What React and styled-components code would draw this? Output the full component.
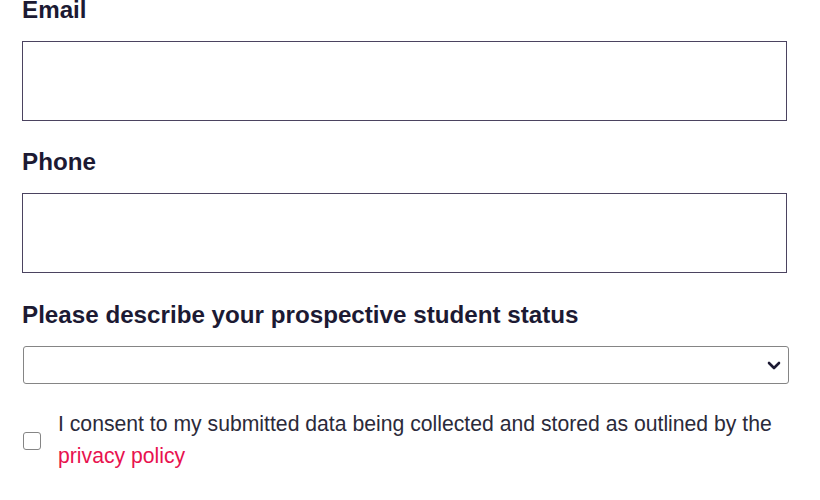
import styled, { createGlobalStyle } from "styled-components";

const GlobalStyle = createGlobalStyle`
  body {
    margin: 0;
    background: #ffffff;
    font-family: "Liberation Sans", Arial, sans-serif;
  }
`;

const Form = styled.form`
  display: flex;
  flex-direction: column;
  width: 766px;
  padding: 0 0 0 22px;
`;

const Field = styled.div`
  display: flex;
  flex-direction: column;
  margin-bottom: ${(p) => p.$gap || "31px"};
`;

const Label = styled.label`
  font-size: 24.2px;
  line-height: 20px;
  font-weight: 700;
  color: #1c1a33;
  margin-bottom: 21px;
`;

const TextInput = styled.input`
  box-sizing: border-box;
  width: 765px;
  height: 80px;
  border: 1.5px solid #4b4360;
  border-radius: 0;
  padding: 0 12px;
  font: inherit;
  font-size: 20px;
  outline: none;
`;

const SelectWrap = styled.div`
  position: relative;
  width: 766px;
  margin-left: 1px;
`;

const Select = styled.select`
  box-sizing: border-box;
  appearance: none;
  width: 100%;
  height: 38px;
  border: 1.5px solid #858585;
  border-radius: 3px;
  background: #ffffff;
  font: inherit;
  font-size: 18px;
  padding: 0 40px 0 8px;
  outline: none;
`;

const Chevron = styled.svg`
  position: absolute;
  right: 8px;
  top: 15px;
  pointer-events: none;
`;

const Consent = styled.div`
  display: flex;
  align-items: center;
  gap: 17px;
  margin-top: -7px;
`;

const Check = styled.input`
  appearance: none;
  flex: none;
  box-sizing: border-box;
  width: 18px;
  height: 18px;
  margin: 2px 0 0 1px;
  border: 1.5px solid #858585;
  border-radius: 3px;
  background: #ffffff;
`;

const ConsentText = styled.p`
  margin: 0;
  font-size: 21.2px;
  line-height: 32px;
  color: #2b2a3a;
`;

const Link = styled.a`
  color: #e8124f;
  text-decoration: none;
`;

export default function App() {
  return (
    <>
      <GlobalStyle />
      <Form onSubmit={(e) => e.preventDefault()}>
        <Field>
          <Label htmlFor="email">Email</Label>
          <TextInput id="email" type="email" />
        </Field>
        <Field $gap="32px">
          <Label htmlFor="phone">Phone</Label>
          <TextInput id="phone" type="tel" />
        </Field>
        <Field $gap="31px">
          <Label htmlFor="status">Please describe your prospective student status</Label>
          <SelectWrap>
            <Select id="status" defaultValue="">
              <option value=""></option>
              <option value="a">Undergraduate</option>
              <option value="b">Postgraduate</option>
            </Select>
            <Chevron width="14" height="9" viewBox="0 0 14 9" fill="none">
              <path d="M2 2l5 5 5-5" stroke="#1c1a33" strokeWidth="2.6" strokeLinecap="round" strokeLinejoin="round" />
            </Chevron>
          </SelectWrap>
        </Field>
        <Consent>
          <Check type="checkbox" id="consent" />
          <ConsentText>
            I consent to my submitted data being collected and stored as outlined by the{" "}
            <Link href="#">privacy policy</Link>
          </ConsentText>
        </Consent>
      </Form>
    </>
  );
}
